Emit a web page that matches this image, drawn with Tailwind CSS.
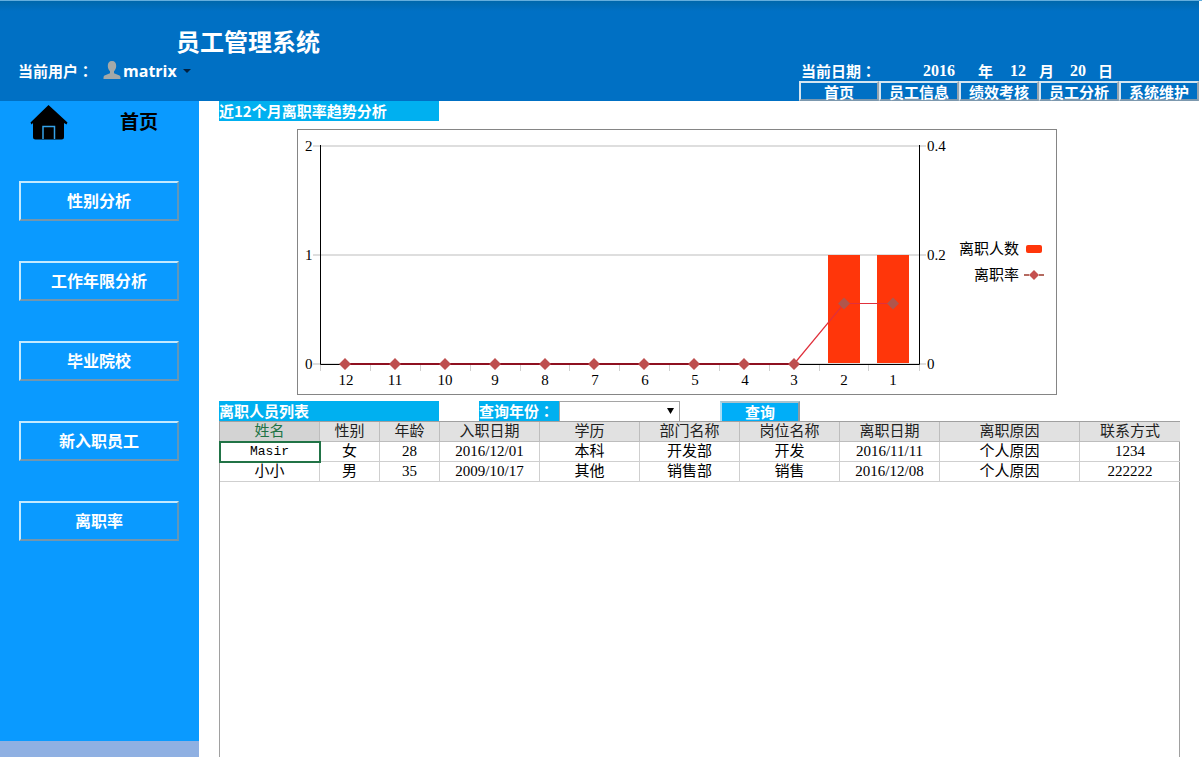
<!DOCTYPE html>
<html lang="zh-CN">
<head>
<meta charset="utf-8">
<title>员工管理系统</title>
<script src="https://cdn.jsdelivr.net/npm/@tailwindcss/browser@4"></script>
</head>
<body class="flex h-screen flex-col overflow-hidden bg-white font-['Noto_Sans_CJK_SC',sans-serif] text-[15px] leading-5 text-black">
<div class="h-px shrink-0 bg-[#64aedd]"></div>
<header class="mr-[3px] flex h-[100px] shrink-0 justify-between bg-linear-to-b from-[#0068ac] to-[#0070c4] to-10% font-bold text-white">
  <div class="flex flex-col pt-[22px]">
    <h1 class="pl-[176px] text-2xl leading-9">员工管理系统</h1>
    <div class="flex items-center pl-[18px]">
      <span class="w-[85px]">当前用户<span class="font-['Noto_Sans_CJK_TC',sans-serif]" lang="zh-TW">：</span></span>
      <button class="flex h-6 items-center font-['Open_Sans',sans-serif] text-base font-bold">
        <svg class="mr-[2px]" width="18" height="20" viewBox="0 0 18 20"><path fill="#a4a9a8" d="M9 0c-3 0-4.300 2-4.200 5 .1 2.500.9 4.100 2.200 5.200v2L1.500 14.500C.6 15 .5 16 .5 18h17c0-2-.1-3-1-3.500L11 12.200v-2c1.300-1.100 2.100-2.700 2.200-5.200C13.300 2 12 0 9 0z"/></svg>
        matrix
        <svg class="ml-[6px]" width="8" height="4" viewBox="0 0 8 4"><path fill="#03203f" d="M0 0h8L4 4z"/></svg>
      </button>
    </div>
  </div>
  <div class="flex w-[400px] flex-col justify-end">
    <div class="grid grid-cols-[122px_55px_32px_29px_31px_28px_20px] pl-[2px]">
      <span>当前日期<span class="font-['Noto_Sans_CJK_TC',sans-serif]" lang="zh-TW">：</span></span>
      <span class="font-['Liberation_Serif',serif] text-base leading-5">2016</span><span>年</span>
      <span class="font-['Liberation_Serif',serif] text-base leading-5">12</span><span>月</span>
      <span class="font-['Liberation_Serif',serif] text-base leading-5">20</span><span>日</span>
    </div>
    <nav class="grid h-5 grid-cols-5">
      <button class="h-5 border-2 border-t-[#d5e5f0] border-r-[#96a4ae] border-b-[#7c98ae] border-l-[#d5e5f0] pt-px leading-4 font-bold whitespace-nowrap">首页</button>
      <button class="h-5 border-2 border-t-[#d5e5f0] border-r-[#96a4ae] border-b-[#7c98ae] border-l-[#d5e5f0] pt-px leading-4 font-bold whitespace-nowrap">员工信息</button>
      <button class="h-5 border-2 border-t-[#d5e5f0] border-r-[#96a4ae] border-b-[#7c98ae] border-l-[#d5e5f0] pt-px leading-4 font-bold whitespace-nowrap">绩效考核</button>
      <button class="h-5 border-2 border-t-[#d5e5f0] border-r-[#96a4ae] border-b-[#7c98ae] border-l-[#d5e5f0] pt-px leading-4 font-bold whitespace-nowrap">员工分析</button>
      <button class="h-5 border-2 border-t-[#d5e5f0] border-r-[#96a4ae] border-b-[#7c98ae] border-l-[#d5e5f0] pt-px leading-4 font-bold whitespace-nowrap">系统维护</button>
    </nav>
  </div>
</header>

<div class="flex min-h-0 flex-1">
  <aside class="flex w-[199px] shrink-0 flex-col border-b-16 border-[#8fb0e2] bg-[#0a9aff]">
    <div class="flex h-10 items-center pl-[30px]">
      <svg class="mt-1" width="38" height="36" viewBox="0 0 38 36"><path fill="#000" d="M18.500 0 37.500 17.500 36.500 19.500 34 18v14q0 2.500-2.500 2.500h-26Q3 34.500 3 32V18l-1.500 1.500L.5 17.500z"/><path fill="none" stroke="#35a2e8" stroke-width="1.500" d="M13 34V21.500h11.500V34"/></svg>
      <h2 class="ml-[52px] text-[19px] font-bold">首页</h2>
    </div>
    <nav class="mt-10 flex flex-col gap-10 pr-5 pl-[19px] text-base font-bold text-white">
      <button class="h-10 border-2 border-t-[#c4eaff] border-r-[#6397b8] border-b-[#7696ac] border-l-[#c4eaff] pb-[2px]">性别分析</button>
      <button class="h-10 border-2 border-t-[#c4eaff] border-r-[#6397b8] border-b-[#7696ac] border-l-[#c4eaff] pb-[2px]">工作年限分析</button>
      <button class="h-10 border-2 border-t-[#c4eaff] border-r-[#6397b8] border-b-[#7696ac] border-l-[#c4eaff] pb-[2px]">毕业院校</button>
      <button class="h-10 border-2 border-t-[#c4eaff] border-r-[#6397b8] border-b-[#7696ac] border-l-[#c4eaff] pb-[2px]">新入职员工</button>
      <button class="h-10 border-2 border-t-[#c4eaff] border-r-[#6397b8] border-b-[#7696ac] border-l-[#c4eaff] pb-[2px]">离职率</button>
    </nav>
  </aside>

  <main class="flex min-w-0 flex-1 flex-col pr-[22px] pl-5">
    <h2 class="h-5 w-[220px] shrink-0 bg-[#00b0f0] font-bold text-white">近12个月离职率趋势分析</h2>
    <figure class="mt-2 mr-[123px] ml-[78px] shrink-0">
      <svg class="block w-full" viewBox="0 0 760 266" role="img" aria-label="近12个月离职率趋势分析">
        <rect x=".5" y=".5" width="759" height="265" fill="#fff" stroke="#858585"/>
        <path fill="none" stroke="#dedede" stroke-width="2" d="M16 17H629M16 126H629M16 235H629"/>
        <path fill="none" stroke="#d0d0d0" d="M23.500 236v6M73.500 236v6M123.500 236v6M173.500 236v6M223.500 236v6M272.500 236v6M322.500 236v6M372.500 236v6M422.500 236v6M472.500 236v6M522.500 236v6M571.500 236v6M622.500 236v6"/>
        <path fill="#ff360a" d="M531 126h32v108h-32zM580 126h32v108h-32z"/>
        <path fill="none" stroke="#000" d="M23.500 16v219.500h599V16"/>
        <path fill="none" stroke="#8e1020" stroke-width="2" d="M48 235H497"/>
        <path fill="none" stroke="#e0303c" stroke-width="1.200" d="M497 235 547 174.500H596"/>
        <path fill="#be4f4f" d="m48 229 6 6-6 6-6-6zM98 229l6 6-6 6-6-6zM148 229l6 6-6 6-6-6zM198 229l6 6-6 6-6-6zM248 229l6 6-6 6-6-6zM297 229l6 6-6 6-6-6zM347 229l6 6-6 6-6-6zM397 229l6 6-6 6-6-6zM447 229l6 6-6 6-6-6zM497 229l6 6-6 6-6-6z"/>
        <path fill="#b0564c" d="m547 168.500 6 6-6 6-6-6zM596 168.500l6 6-6 6-6-6z"/>
        <g class="font-['Liberation_Serif',serif] text-[15px]">
          <text x="8" y="22">2</text><text x="8" y="131">1</text><text x="8" y="240">0</text>
          <text x="630" y="22">0.4</text><text x="630" y="131">0.2</text><text x="630" y="240">0</text>
          <g text-anchor="middle">
            <text x="49" y="256">12</text><text x="98" y="256">11</text><text x="148" y="256">10</text><text x="198" y="256">9</text><text x="248" y="256">8</text><text x="298" y="256">7</text><text x="348" y="256">6</text><text x="398" y="256">5</text><text x="448" y="256">4</text><text x="497" y="256">3</text><text x="547" y="256">2</text><text x="596" y="256">1</text>
          </g>
        </g>
        <g class="text-[15px]" text-anchor="end">
          <text x="722" y="125">离职人数</text><text x="722" y="151">离职率</text>
        </g>
        <rect x="729" y="116" width="16" height="8" rx="2" fill="#ff360a"/>
        <path stroke="#b46a60" stroke-width="2" d="M727 146h5M742 146h5"/><path fill="#c5504f" d="m737 141 5 5-5 5-5-5z"/>
      </svg>
    </figure>

    <form class="mt-[6px] flex h-5 shrink-0 overflow-hidden font-bold text-white">
      <h2 class="w-[220px] bg-[#00b0f0]">离职人员列表</h2>
      <label for="year" class="ml-10 w-20 bg-[#00b0f0]">查询年份<span class="font-['Noto_Sans_CJK_TC',sans-serif]" lang="zh-TW">：</span></label>
      <div class="relative w-[121px]">
        <select id="year" class="h-[22px] w-full appearance-none border border-[#a5a5a5] bg-white text-black"><option></option></select>
        <svg class="pointer-events-none absolute top-[7px] right-[6px]" width="7" height="6" viewBox="0 0 7 6"><path d="M0 0h7L3.500 6z"/></svg>
      </div>
      <button type="button" class="ml-10 h-[22px] w-20 border-2 border-t-[#a9c3ce] border-r-[#8b9ba4] border-b-[#8b9ba4] border-l-[#a9dcf4] bg-[#00aef8] leading-4 font-bold">查询</button>
    </form>

    <div class="min-h-0 flex-1 border-x border-t border-[#a0a0a0]">
      <table class="w-full table-fixed border-separate border-spacing-0 text-center font-['Liberation_Serif','Noto_Sans_CJK_SC',serif]">
        <colgroup><col class="w-[100px]"><col class="w-[60px]"><col class="w-[60px]"><col class="w-[100px]"><col class="w-[100px]"><col class="w-[100px]"><col class="w-[100px]"><col class="w-[100px]"><col class="w-[140px]"><col class="w-[100px]"></colgroup>
        <thead>
          <tr class="h-5 bg-[#e1e1e1] leading-[19px] text-[#222] *:border-r *:border-b *:border-[#bdbdbd] *:p-0 *:font-normal *:last:border-r-0">
            <th class="bg-[#d3d3d3] text-[#217346]">姓名</th><th>性别</th><th>年龄</th><th>入职日期</th><th>学历</th><th>部门名称</th><th>岗位名称</th><th>离职日期</th><th>离职原因</th><th>联系方式</th>
          </tr>
        </thead>
        <tbody>
          <tr class="h-5 leading-[19px] *:border-r *:border-b *:border-[#cfcfcf] *:p-0 *:last:border-r-0">
            <td class="font-['Liberation_Mono',monospace] text-[13px] outline-2 -outline-offset-1 outline-[#217346]">Masir</td><td>女</td><td>28</td><td>2016/12/01</td><td>本科</td><td>开发部</td><td>开发</td><td>2016/11/11</td><td>个人原因</td><td>1234</td>
          </tr>
          <tr class="h-5 leading-[19px] *:border-r *:border-b *:border-[#cfcfcf] *:p-0 *:last:border-r-0">
            <td>小小</td><td>男</td><td>35</td><td>2009/10/17</td><td>其他</td><td>销售部</td><td>销售</td><td>2016/12/08</td><td>个人原因</td><td>222222</td>
          </tr>
        </tbody>
      </table>
    </div>
  </main>
</div>
</body>
</html>
